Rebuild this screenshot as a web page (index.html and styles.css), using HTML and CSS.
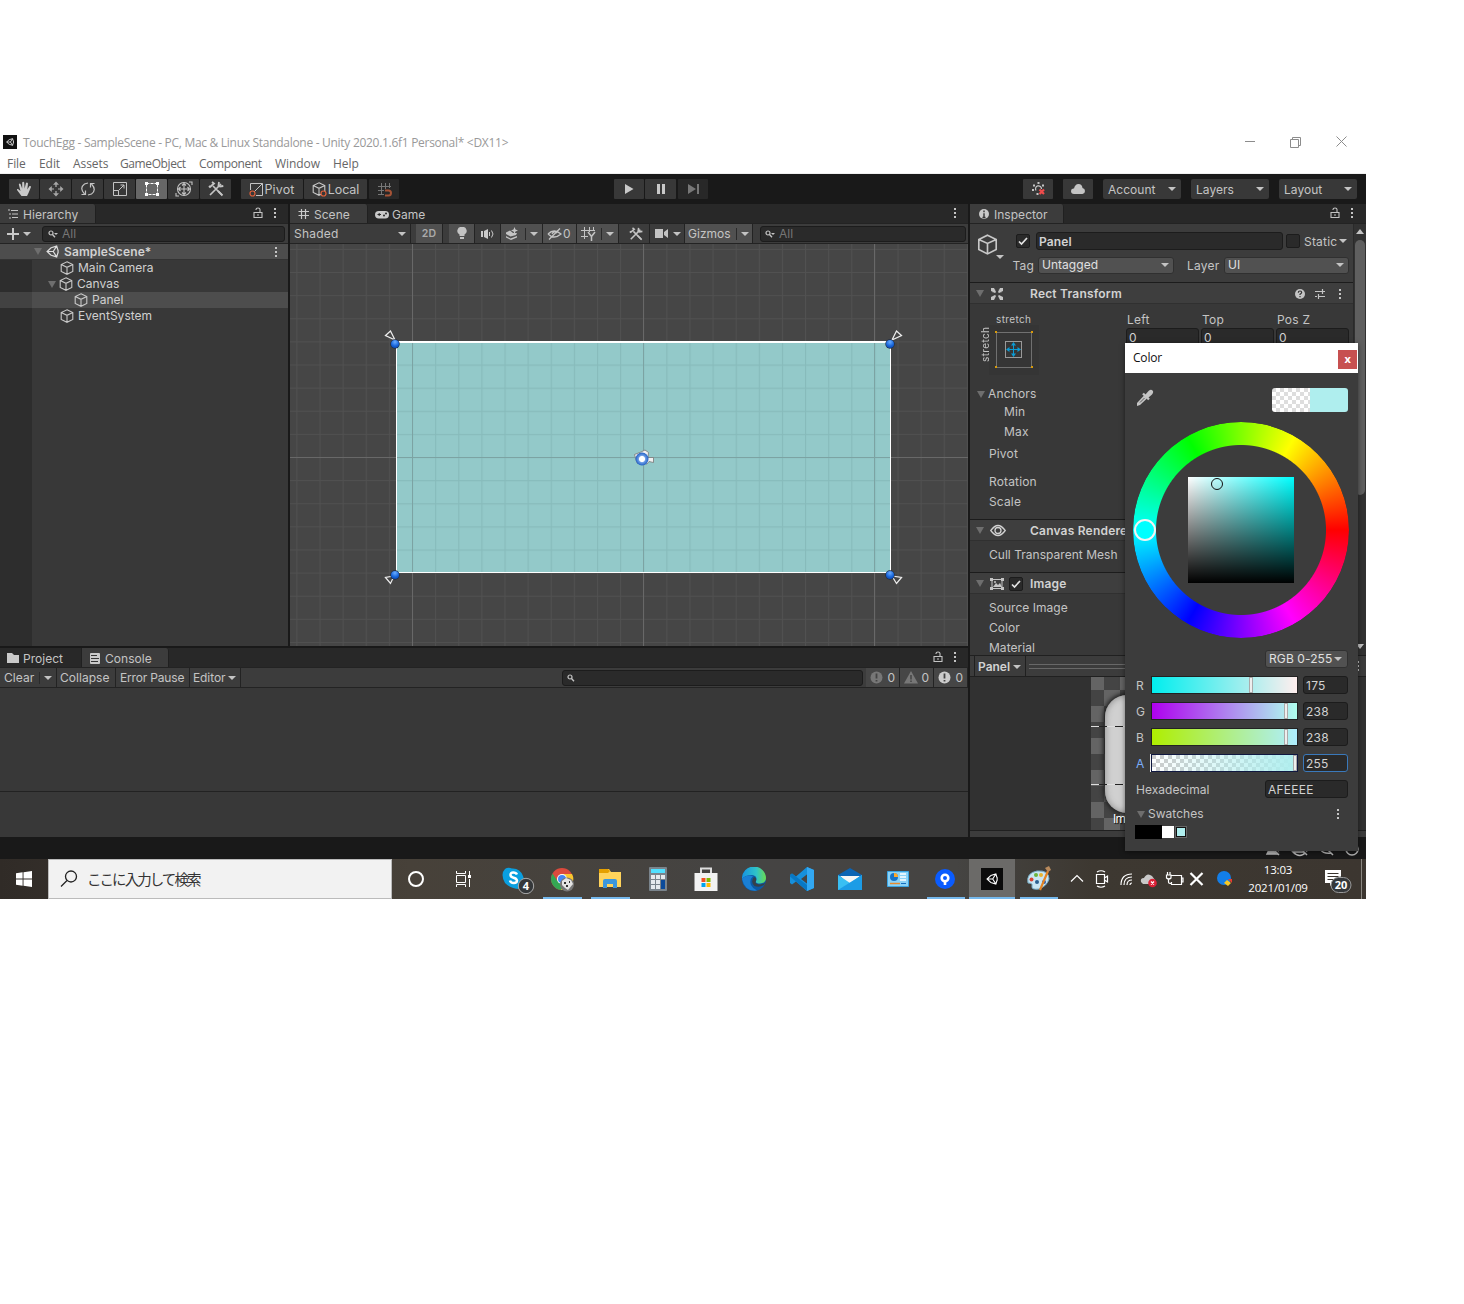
FILE: index.html
```html
<!DOCTYPE html>
<html lang="ja">
<head>
<meta charset="utf-8">
<title>TouchEgg - Unity</title>
<link rel="stylesheet" href="styles.css">
</head>
<body>
<svg class="defs" width="0" height="0">
  <defs>
    <symbol id="cube" viewBox="0 0 14 14"><path d="M7 .8 12.8 3.6V10.400L7 13.300 1.200 10.400V3.600ZM1.200 3.600 7 6.300 12.800 3.600M7 6.300V13.300" fill="none" stroke="#c8c8c8" stroke-width="1.100"/></symbol>
    <symbol id="lock" viewBox="0 0 10 12"><path d="M1 5.500H9V10.500H1ZM3 3V2.500Q3 1 5 1T7 2.500V5.500M4 8H6" fill="none" stroke="#c4c4c4" stroke-width="1.100"/></symbol>
    <symbol id="dots" viewBox="0 0 4 12"><path d="M1 1H3V3H1ZM1 5H3V7H1ZM1 9H3V11H1Z" fill="#c4c4c4"/></symbol>
    <symbol id="mag" viewBox="0 0 10 8"><circle cx="3" cy="3" r="2" fill="none" stroke="#c4c4c4" stroke-width="1.200"/><path d="M4.500 4.500 7 7.200" stroke="#c4c4c4" stroke-width="1.400"/></symbol>
    <symbol id="magd" viewBox="0 0 10 8"><circle cx="3" cy="3" r="2" fill="none" stroke="#c4c4c4" stroke-width="1.200"/><path d="M4.500 4.500 7 7.200" stroke="#c4c4c4" stroke-width="1.400"/><path d="M6 3H10L8 5Z" fill="#c4c4c4"/></symbol>
    <symbol id="check" viewBox="0 0 12 12"><path d="M2 6.500 4.500 9 10 3" fill="none" stroke="#e4e4e4" stroke-width="1.700"/></symbol>
    <symbol id="unity" viewBox="0 0 14 14"><path d="M5.500 3 1.200 7 5.500 11M5.500 3 11.500 1.200 13 6M5.500 11 11.500 12.800 13 8M1.200 7H7.800M7.800 7 11.500 1.200M7.800 7 11.500 12.800M13 5V9" fill="none" stroke="currentColor" stroke-width="1.300"/></symbol>
    <symbol id="tools" viewBox="0 0 16 16"><path d="M2 14 13 3M5 5 14 14" stroke="#c4c4c4" stroke-width="1.700"/><path d="M11 1 10.500 4.500 12 5.500 15.300 5M1 5 2 6 6 2.500 4 1M10 10 14.500 14.500" fill="none" stroke="#c4c4c4" stroke-width="1.800"/></symbol>
  </defs>
</svg>
<div class="screen">
  <header class="titlebar">
    <svg class="appicon" width="14" height="14"><rect width="14" height="14" fill="#111"/><g color="#fff" transform="translate(3 3)"><use href="#unity" width="8" height="8"/></g></svg>
    <span class="title">TouchEgg - SampleScene - PC, Mac &amp; Linux Standalone - Unity 2020.1.6f1 Personal* &lt;DX11&gt;</span>
    <svg class="winbtns" width="104" height="14" fill="none" stroke="#8c8c8c"><path d="M0 6.500H10M45.500 4.500H53.500V12.500H45.500ZM47.500 4.500V2.500H55.500V10.500H53.500M91.500 1.500 101.500 11.500M101.500 1.500 91.500 11.500"/></svg>
  </header>
  <nav class="menubar"><span class="m1">File</span><span class="m2">Edit</span><span class="m3">Assets</span><span class="m4">GameObject</span><span class="m5">Component</span><span class="m6">Window</span><span>Help</span></nav>
  <div class="toolbar">
    <div class="tools">
      <b class="tb w30"><svg width="16" height="16"><path d="M5.500 15 1 9Q.6 7.800 2 8L4.500 10 2.800 3.500Q3.500 2 4.500 3L6.200 7.500V1.500Q7.200.2 8.200 1.500L8.600 7.500 10 2Q11.200 1 12 2.500L11.300 8.500 13.500 5Q15 4.500 15 6L12.500 12 11 15Z" fill="#c9c9c9"/></svg></b>
      <b class="tb"><svg width="16" height="16"><path d="M8 2V6M8 10V14M2 8H6M10 8H14" stroke="#b4b4b4" stroke-width="1.200"/><path d="M5 3.800 8 .5 11 3.800ZM5 12.200 8 15.500 11 12.200ZM3.800 5 .5 8 3.800 11ZM12.200 5 15.500 8 12.200 11Z" fill="#a8a8a8"/></svg></b>
      <b class="tb"><svg width="16" height="16" fill="none" stroke="#c4c4c4" stroke-width="1.200"><path d="M4.500 13Q-1 7 4.500 3L8 2M11.500 3Q17 9 11.500 13L8 14M1.500 13.500H5.500V9.500M14.500 2.500H10.500V6.500"/></svg></b>
      <b class="tb"><svg width="16" height="16" fill="none" stroke="#c4c4c4"><path d="M1.500 1.500H14.500V14.500H1.500ZM1.500 9.500H6.500V14.500M6.500 9.500 12 4M8.500 4H12V7.500"/></svg></b>
      <b class="tb on"><svg width="16" height="16"><path d="M2.500 2.500H13.500V13.500H2.500Z" fill="none" stroke="#fff" stroke-dasharray="3 1"/><path d="M1 1H4V4H1ZM12 1H15V4H12ZM1 12H4V15H1ZM12 12H15V15H12Z" fill="#fff"/></svg></b>
      <b class="tb"><svg width="18" height="16" fill="none" stroke="#c4c4c4" stroke-width="1.100"><circle cx="9" cy="8" r="6.500"/><path d="M9 2.500V13.500M3.500 8H14.500M7 4.500 9 2.500 11 4.500M7 11.500 9 13.500 11 11.500M5.500 6 3.500 8 5.500 10M12.500 6 14.500 8 12.500 10M14 1H17V4M1 12V15H4"/></svg></b>
      <b class="tb"><svg width="16" height="16"><use href="#tools"/></svg></b>
    </div>
    <div class="pivots">
      <b class="tb w62"><svg width="15" height="15" fill="none"><path d="M1.500 8V1.500H13.500V13.500H7M5 10 13.500 1.500" stroke="#c4c4c4"/><circle cx="3.500" cy="11.500" r="2.500" stroke="#e0603a" stroke-width="1.200"/></svg><span>Pivot</span></b>
      <b class="tb w63"><svg width="16" height="15"><use href="#cube" width="14" height="14"/><circle cx="11.500" cy="11.500" r="2.500" fill="#383838" stroke="#e0603a" stroke-width="1.200"/></svg><span>Local</span></b>
      <b class="tb w30 dim"><svg width="15" height="15" fill="none"><path d="M4.500 1V13M8.500 1V7M12.500 1V6M1 4.500H14M1 8.500H7M1 12.500H7" stroke="#777"/><path d="M8 8.500H11.500Q14 8.500 14 11T11.500 13.500H8" stroke="#a65336" stroke-width="2"/></svg></b>
    </div>
    <div class="plays">
      <b class="tb w30"><svg width="10" height="10"><path d="M1 0 9.500 5 1 10Z" fill="#c9c9c9"/></svg></b>
      <b class="tb"><svg width="10" height="10"><path d="M1 0H4V10H1ZM6 0H9V10H6Z" fill="#c9c9c9"/></svg></b>
      <b class="tb w30 dim"><svg width="11" height="10"><path d="M0 0 8 5 0 10ZM9 0H11V10H9Z" fill="#777"/></svg></b>
    </div>
    <div class="account">
      <b class="tb w30"><svg width="15" height="14"><path d="M5 8.500A3 3 0 1 1 10.500 7" fill="none" stroke="#c4c4c4" stroke-width="1.200"/><path d="M6.500 0H8.500V2H6.500ZM2 2.500H4V4.500H2ZM11 2.500H13V4.500H11ZM1 7H3V9H1ZM5.500 11H7.500V13H5.500Z" fill="#c4c4c4"/><path d="M8.500 7.500 13 12M13 7.500 8.500 12" stroke="#f04c4c" stroke-width="2.200"/></svg></b>
      <b class="tb w30"><svg width="14" height="10"><path d="M3 10Q0 10 0 7T3 4.500Q4 0 7.500 0T11.500 4Q14 4.500 14 7T11.500 10Z" fill="#c4c4c4"/></svg></b>
      <b class="tb drop"><span>Account</span><i class="tri"></i></b><b class="tb drop"><span>Layers</span><i class="tri"></i></b><b class="tb drop"><span>Layout</span><i class="tri"></i></b>
    </div>
  </div>

  <main class="work">
    <div class="left">
      <div class="upper">
        <section class="pane hierarchy">
          <div class="tabs">
            <span class="tab th"><svg width="12" height="10"><path d="M1 1H3M2 5H4M2 9H4" stroke="#c4c4c4"/><path d="M4 1.500H11M5 5H11M5 8.500H11" stroke="#c4c4c4"/></svg>Hierarchy</span>
            <svg class="lk" width="10" height="12"><use href="#lock"/></svg><svg width="4" height="12"><use href="#dots"/></svg>
          </div>
          <div class="bar">
            <svg class="plus" width="12" height="12"><path d="M6 0V12M0 6H12" stroke="#c9c9c9" stroke-width="2"/></svg><i class="tri"></i>
            <span class="search s1"><svg width="10" height="8"><use href="#magd"/></svg>All</span>
          </div>
          <div class="tree">
            <div class="node scene-node"><i class="fold"></i><svg width="14" height="14" color="#ddd"><use href="#unity" width="13" height="13"/></svg><strong>SampleScene*</strong><svg class="nd" width="4" height="12"><use href="#dots"/></svg></div>
            <div class="node l1"><svg width="14" height="14"><use href="#cube"/></svg>Main Camera</div>
            <div class="node l1c"><i class="fold"></i><svg width="14" height="14"><use href="#cube"/></svg>Canvas</div>
            <div class="node l2 sel"><svg width="14" height="14"><use href="#cube"/></svg>Panel</div>
            <div class="node l1"><svg width="14" height="14"><use href="#cube"/></svg>EventSystem</div>
          </div>
        </section>
        <section class="pane sceneview">
          <div class="tabs">
            <span class="tab ts"><svg width="12" height="12"><path d="M3.500 1V11M7.500 1V11M.5 3.500H11M.5 7.500H11" stroke="#c9c9c9" stroke-width="1.200"/></svg>Scene</span>
            <span class="tab-off"><svg width="14" height="9"><rect y="1" width="14" height="7.500" rx="3.700" fill="#c9c9c9"/><path d="M2.500 4.500H6M4.200 3V6" stroke="#282828"/><circle cx="9" cy="5.500" r="1" fill="#282828"/><circle cx="11" cy="3.500" r="1" fill="#282828"/></svg>Game</span>
            <svg class="push" width="4" height="12"><use href="#dots"/></svg>
          </div>
          <div class="bar sbar">
            <span class="c shade">Shaded<i class="tri"></i></span>
            <span class="c lit w2d"><strong>2D</strong></span>
            <span class="c lit wb"><svg width="10" height="13"><path d="M5 0A4 4 0 0 1 7.500 7.500V9H2.500V7.500A4 4 0 0 1 5 0ZM3 10H7V12H3Z" fill="#c4c4c4"/></svg></span>
            <span class="c wb"><svg width="13" height="12"><path d="M0 3H2V9H0ZM3 3 7 1V11L3 9Z" fill="#c9c9c9"/><path d="M8.500 4V8M10.500 2.500Q13.500 6 10.500 9.500" fill="none" stroke="#c9c9c9"/></svg></span>
            <span class="c lit wfx"><svg width="14" height="13"><path d="M1 5.500 5 3.500 8 6 12 6 11 8 5.500 9.500 1 7ZM1 9 5.500 11.500 12 9V10.500L6 13 1 10.500ZM9.500 0 10.500 2.500 13 3.500 10.500 4.500 9.500 7 8.500 4.500 6 3.500 8.500 2.500Z" fill="#c4c4c4"/></svg><i class="sep"></i><i class="tri"></i></span>
            <span class="c lit weye"><svg width="15" height="12" fill="none" stroke="#c4c4c4" stroke-width="1.300"><path d="M1 6Q7 0 14 6Q7 12 1 6M2 11.500 13 .5M5 6Q7.500 2 10 5"/></svg>0</span>
            <span class="c lit wgrid"><svg width="15" height="14" fill="none" stroke="#c4c4c4"><path d="M3.500 0V12M8.500 0V5M12.500 0V4M0 3.500H14M0 9.500H7"/><path d="M7 5 10.500 9.500 14 5M10.500 9V14" stroke-width="1.500"/></svg><i class="sep"></i><i class="tri"></i></span>
            <span class="c wt"><svg width="14" height="14"><use href="#tools"/></svg></span>
            <span class="c wcam"><svg width="13" height="9"><path d="M0 0H8V9H0ZM9 3 13 0V9L9 6Z" fill="#c4c4c4"/></svg><i class="tri"></i></span>
            <span class="c lit wgiz">Gizmos<i class="sep"></i><i class="tri"></i></span>
            <span class="search s2"><svg width="10" height="8"><use href="#magd"/></svg>All</span>
          </div>
          <svg class="canvas" width="678" height="402" viewBox="290 244 678 402">
            <defs>
              <pattern id="minor" x="412" y="457" width="23.120" height="23.120" patternUnits="userSpaceOnUse"><path d="M.5 0V23.120M0 .5H23.120" stroke="#fff" stroke-opacity=".06" stroke-width="1" fill="none"/></pattern>
              <pattern id="minord" x="412" y="457" width="23.120" height="23.120" patternUnits="userSpaceOnUse"><path d="M.5 0V23.120M0 .5H23.120" stroke="#4a7878" stroke-opacity=".17" stroke-width="1.200" fill="none"/></pattern>
              <radialGradient id="knob" cx=".5" cy=".25" r=".8"><stop offset="0" stop-color="#6aadff"/><stop offset=".6" stop-color="#1967dc"/><stop offset="1" stop-color="#0b45a8"/></radialGradient>
              <radialGradient id="lens" cx=".5" cy=".5" r=".5"><stop offset=".4" stop-color="#fff"/><stop offset=".55" stop-color="#6c9de6"/><stop offset="1" stop-color="#1f5fc4"/></radialGradient>
              <g id="handle"><circle r="4.700" fill="#1d2b45"/><circle r="4" fill="url(#knob)"/></g>
            </defs>
            <rect x="290" y="244" width="678" height="402" fill="#464646"/>
            <rect x="290" y="244" width="678" height="402" fill="url(#minor)"/>
            <path d="M412.500 244V646M643.500 244V646M874.500 244V646M290 457.500H968" stroke="#686868"/>
            <rect x="396" y="342" width="495" height="231" fill="#93c9c9"/>
            <rect x="396" y="342" width="495" height="231" fill="url(#minord)"/>
            <path d="M412.500 342V573M643.500 342V573M874.500 342V573M396 457.500H891" stroke="#7ca3a3"/>
            <path d="M396.500 342V572.500H890.500V342" fill="none" stroke="#fff"/><path d="M396 342H891" stroke="#fff" stroke-width="2"/>
            <g fill="#464646" stroke="#eee" stroke-width="1.200"><path d="M385.500 335.500 390.500 331 395 340Z"/><path d="M901.500 335.500 896.500 331 892 340Z"/><path d="M385.500 577.500 390.500 583.500 394 576Z"/><path d="M901.500 577.500 896.500 583.500 892 576Z"/></g>
            <use href="#handle" x="395" y="344"/><use href="#handle" x="890" y="344"/><use href="#handle" x="395" y="575"/><use href="#handle" x="890" y="575"/>
            <path d="M634.500 454.500 641 452 645 450 648.500 452.500 648 457.500 653.500 457.500V462.500L649 461.500 647 464 637 463Z" fill="#f0f0f0" stroke="#777" stroke-width=".8"/>
            <circle cx="642" cy="459" r="6.500" fill="url(#lens)"/>
          </svg>
        </section>
      </div>
      <section class="pane console">
        <div class="tabs">
          <span class="tab-off tp"><svg width="12" height="10"><path d="M0 0H5L7 2H12V10H0Z" fill="#c9c9c9"/></svg>Project</span>
          <span class="tab tc"><svg width="10" height="11"><rect width="10" height="11" rx="1" fill="#c9c9c9"/><path d="M1 2.500H7M1 5.500H9M1 8.500H8" stroke="#333"/></svg>Console</span>
          <svg class="lk" width="10" height="12"><use href="#lock"/></svg><svg width="4" height="12"><use href="#dots"/></svg>
        </div>
        <div class="bar cbar">
          <span class="c k1">Clear<i class="sep"></i><i class="tri"></i></span><span class="c k2">Collapse</span><span class="c k3">Error Pause</span><span class="c k4">Editor<i class="tri"></i></span>
          <span class="search s3"><svg width="10" height="8"><use href="#mag"/></svg></span>
          <span class="c k5 lit2"><svg width="13" height="13"><circle cx="6.500" cy="6.500" r="6" fill="#777"/><path d="M6.500 2.500V7.500M6.500 9V10.500" stroke="#444" stroke-width="1.800"/></svg>0</span>
          <span class="c k6 lit2"><svg width="14" height="13"><path d="M7 0 14 12.500H0Z" fill="#777"/><path d="M7 4V8.500M7 9.500V11" stroke="#444" stroke-width="1.500"/></svg>0</span>
          <span class="c k7 lit2"><svg width="14" height="13"><circle cx="6.500" cy="6.500" r="6" fill="#ccc"/><path d="M6.500 2.500V7.500M6.500 9V10.500" stroke="#444" stroke-width="1.800"/></svg>0</span>
        </div>
        <div class="log"></div><div class="detail"></div>
      </section>
    </div>

    <section class="pane inspector">
      <div class="tabs">
        <span class="tab ti"><svg width="10" height="10"><circle cx="5" cy="5" r="5" fill="#c9c9c9"/><path d="M5 1.500V3.200M5 4.200V8.500M3.500 8.500H6.500" stroke="#333" stroke-width="1.400"/></svg>Inspector</span>
        <svg class="lk" width="10" height="12"><use href="#lock"/></svg><svg width="4" height="12"><use href="#dots"/></svg>
      </div>
      <div class="insp-body">
        <div class="props">
          <div class="objhead">
            <svg width="28" height="30"><use href="#cube" x="0" y="1" width="21" height="23"/><path d="M19 23H27L23 27Z" fill="#c4c4c4"/></svg>
            <div class="objrows">
              <div class="orow"><span class="chk"><svg width="12" height="12"><use href="#check"/></svg></span><span class="field fname"><strong>Panel</strong></span><span class="chk"></span><span class="static">Static</span><i class="tri"></i></div>
              <div class="orow2"><span class="lab tag">Tag</span><span class="dd d1">Untagged<i class="tri"></i></span><span class="lab layer">Layer</span><span class="dd d2">UI<i class="tri"></i></span></div>
            </div>
          </div>
          <div class="comp"><i class="fold"></i><svg class="ci" width="14" height="12"><path d="M1.500 1 5 4.500M2 4.500H5V1M12.500 1 9 4.500M9 1V4.500H12M1.500 11 5 7.500M12.500 11 9 7.500" fill="none" stroke="#555"/><path d="M1 0H4L6 4 5 5 1 3ZM13 0H10L8 4 9 5 13 3ZM1 12H4L6 8 5 7 1 9ZM13 12H10L8 8 9 7 13 9Z" fill="#c4c4c4"/></svg><strong>Rect Transform</strong>
            <svg class="help" width="52" height="12"><circle cx="6" cy="6" r="5" fill="#c4c4c4"/><path d="M4.300 4.800Q4.300 3 6 3T7.700 4.700Q7.500 5.500 6 6.200V7M6 8V9.200" fill="none" stroke="#333" stroke-width="1.200"/><path d="M21 3.500H28M29 3.500H31M21 8.500H23M25 8.500H31M28.500 1V6M24.500 6V11" stroke="#c4c4c4" stroke-width="1.200"/><use href="#dots" x="44" width="4" height="12"/></svg>
          </div>
          <div class="rect">
            <div class="anchorbox"><small>stretch</small><div class="arow"><small class="vert">stretch</small>
              <svg width="50" height="50"><rect width="50" height="50" fill="#353535"/><rect x="7.500" y="7.500" width="35" height="35" fill="none" stroke="#707070"/><rect x="16.500" y="16.500" width="16" height="16" fill="none" stroke="#999"/><path d="M24.500 18V31M18 24.500H31" stroke="#0a9bd4"/><path d="M22 20.500 24.500 17 27 20.500ZM22 28.500 24.500 32 27 28.500ZM20.500 22 17 24.500 20.500 27ZM28.500 22 32 24.500 28.500 27Z" fill="#0a9bd4"/><path d="M6 6H8V8H6ZM42 6H44V8H42ZM6 41H8V43H6ZM42 41H44V43H42Z" fill="#d79a0a"/></svg></div></div>
            <div class="ltz"><div><span>Left</span><span class="field">0</span></div><div><span>Top</span><span class="field">0</span></div><div><span>Pos Z</span><span class="field">0</span></div></div>
            <div class="plist"><p class="anch"><i class="fold"></i>Anchors</p><p class="in">Min</p><p class="in">Max</p><p class="pv">Pivot</p><p class="ro">Rotation</p><p>Scale</p></div>
          </div>
          <div class="comp"><i class="fold"></i><svg class="ci" width="17" height="13" fill="none" stroke="#d2d2d2" stroke-width="1.300"><path d="M.8 6.500Q8 -3.500 15.200 6.500Q8 16.500 .8 6.500Z"/><circle cx="8" cy="6.500" r="3"/></svg><strong>Canvas Renderer</strong></div>
          <div class="cull">Cull Transparent Mesh</div>
          <div class="comp"><i class="fold"></i><svg class="ci" width="14" height="12"><path d="M2 1.500H12V10.500H2Z" fill="none" stroke="#c4c4c4"/><path d="M0 0H3V3H0ZM11 0H14V3H11ZM0 9H3V12H0ZM11 9H14V12H11ZM3 9 6 5 8 7 10 5 12 9Z" fill="#c4c4c4"/><circle cx="5" cy="4" r="1" fill="#c4c4c4"/></svg><span class="chk ck2"><svg width="12" height="12"><use href="#check"/></svg></span><strong>Image</strong></div>
          <div class="imgp"><p>Source Image</p><p>Color</p><p>Material</p></div>
        </div>
        <div class="scroll"><i class="up"></i><i class="thumb"></i><i class="down"></i></div>
      </div>
      <div class="prevhead"><span><strong>Panel</strong><i class="tri"></i></span><i class="grip"></i><svg width="4" height="12"><use href="#dots"/></svg></div>
      <div class="preview"><div class="checker"><div class="sprite"></div><i class="dash da"></i><i class="dash db"></i><span>Im</span></div></div>
      <div class="prevfoot"></div>
    </section>
  </main>
  <div class="status"><svg width="96" height="16" fill="none" stroke="#b8b8b8" stroke-width="1.500"><path d="M3 13Q9 -1 15 13Z" fill="#b8b8b8"/><path d="M29 11Q36 18 42 11ZM57 9Q59 13 68 12"/><path d="M4 2 16 14M32 2 44 14M58 2 70 14" stroke="#191919" stroke-width="2"/><path d="M3 2 15 14M31 2 43 14M57 2 69 14"/><circle cx="88" cy="8" r="6"/></svg></div>

  <footer class="taskbar">
    <span class="start"><svg width="16" height="16" fill="#fff"><path d="M0 2.200 6.600 1.300V7.500H0ZM7.500 1.200 16 0V7.500H7.500ZM0 8.500H6.600V14.700L0 13.800ZM7.500 8.500H16V16L7.500 14.800Z"/></svg></span>
    <span class="find"><svg width="18" height="18" fill="none" stroke="#222" stroke-width="1.300"><circle cx="11" cy="6.500" r="5.500"/><path d="M7 10.500 1 16.500"/></svg>ここに入力して検索</span>
    <span class="app"><svg width="18" height="18"><circle cx="9" cy="9" r="7" fill="none" stroke="#fff" stroke-width="2"/></svg></span>
    <span class="app tv"><svg width="17" height="16" fill="none" stroke="#fff"><path d="M1.500 4.500H10.500V11.500H1.500ZM1.500 0V2.500H10.500V0M1.500 16V13.500H10.500V16M14.500 0V4M14.500 8V16"/><path d="M13 4H16V7H13Z" fill="#fff" stroke="none"/></svg></span>
    <span class="app"><svg width="34" height="30"><path d="M11 4.500Q19 4 22 12Q26 22 18 25Q10 25 4 19Q-1 10 4 5Q7 3 11 4.500Z" fill="#0a9fe0"/><path d="M16 10.500Q15 8.500 12.200 8.500T9.500 11Q9.500 13 12.500 13.700T16 16.500Q16 19 12.800 19T9 16.500" fill="none" stroke="#fff" stroke-width="2.500"/><circle cx="25" cy="22" r="7.700" fill="#343739" stroke="#aaa"/><text x="25" y="26" text-anchor="middle" class="badge">4</text></svg></span>
    <span class="app run"><svg width="24" height="26"><circle cx="12" cy="13" r="11" fill="#dc4a3d"/><path d="M2.500 7.500A11 11 0 0 0 11 24L16.500 15 7.500 15Z" fill="#34a653"/><path d="M12 8H22A11 11 0 0 1 11 24L16.500 15.500Z" fill="#f9c62f"/><circle cx="12" cy="13" r="5" fill="#fff"/><circle cx="12" cy="13" r="4" fill="#4487f4"/><circle cx="17" cy="18.500" r="7" fill="#777"/><path d="M12 15 16 12 21 14 23 18 18 24 15 22 12 19Z" fill="#e4e4e4"/><path d="M14 16H16V18H14ZM19 15H20V17H19ZM16 19H18V21H16Z" fill="#333"/></svg></span>
    <span class="app run"><svg width="24" height="22"><path d="M1 1H11L13 4H23V19H1Z" fill="#ffd35b"/><path d="M1 1H10L12 3 10 5H1Z" fill="#e5a000"/><path d="M5 20V13Q5 11 7 11H17Q19 11 19 13V20H15V16H9V20Z" fill="#3a96dd"/></svg></span>
    <span class="app"><svg width="18" height="24"><rect width="18" height="24" rx="1" fill="#7a848c"/><path d="M2 2H16V6H2Z" fill="#50e0ff"/><path d="M2 8H6V12H2ZM7 8H11V12H7ZM12 8H16V12H12ZM2 13H6V17H2ZM7 13H11V17H7ZM2 18H6V22H2ZM7 18H11V22H7Z" fill="#e6eaed"/><path d="M12 13H16V22H12Z" fill="#0a4a9a"/></svg></span>
    <span class="app"><svg width="24" height="24"><path d="M7 6V1.500H17V6" fill="none" stroke="#ddd" stroke-width="2"/><path d="M.5 6H23.500V24H.5Z" fill="#f2f2f2"/><path d="M7.500 11H11.500V15H7.500Z" fill="#f25022"/><path d="M12.500 11H16.500V15H12.500Z" fill="#7fba00"/><path d="M7.500 16H11.500V20H7.500Z" fill="#00a4ef"/><path d="M12.500 16H16.500V20H12.500Z" fill="#ffb900"/></svg></span>
    <span class="app"><svg width="24" height="24"><defs><linearGradient id="eg"><stop stop-color="#1693e0"/><stop offset=".6" stop-color="#2fc3c8"/><stop offset="1" stop-color="#6bdc50"/></linearGradient></defs><circle cx="12" cy="12" r="12" fill="#0c59a4"/><path d="M0 12A12 12 0 0 1 24 11Q24 16 18 16.500Q13 16.500 14 14Q16 9 10 8Q3 8 0 12Z" fill="url(#eg)"/><path d="M0 12Q4 7 11 9Q7 13 9 18Q11 22 15 23.600Q3 25 0 12Z" fill="#1a7fd4"/><path d="M14 14Q12 17 18 17.500 21 17 23 16L22 18Q17 21 12.500 19 8 15 12 10 15 11 14 14Z" fill="#35404a"/></svg></span>
    <span class="app"><svg width="24" height="24"><path d="M17 0 24 3V21L17 24 6 14.500 2 17.500 0 16V8L2 6.500 6 9.500ZM17.500 7 11 12 17.500 17Z" fill="#1690dc" fill-rule="evenodd"/><path d="M17 0 24 3V21L17 24Z" fill="#32a8f2"/><path d="M0 8 2 6.500 17 18V24L0 9.500Z" fill="#0878c4"/></svg></span>
    <span class="app"><svg width="24" height="24"><path d="M0 8 12 1 24 8V14H0Z" fill="#0b64b4"/><path d="M2 9H22L12 18Z" fill="#f5f5f5"/><path d="M0 8 12 16 24 8V23H0Z" fill="#39bff3"/><path d="M0 23 24 8V23Z" fill="#1c9ce6"/></svg></span>
    <span class="app"><svg width="22" height="17"><path d="M.5.5H21.500V15.500H.5Z" fill="#8bd3f8" stroke="#3ba5e4"/><circle cx="7" cy="6" r="4" fill="#1673c8"/><path d="M7 6V2A4 4 0 0 1 11 6Z" fill="#ffa929"/><path d="M13 3H19M13 6H19M13 9H19" stroke="#fff" stroke-width="1.500"/><path d="M3 12.500H13" stroke="#e78a2c" stroke-width="1.500"/><path d="M14 12.500H19" stroke="#176fc0"/></svg></span>
    <span class="app n47 run sta"><svg width="20" height="20"><circle cx="10" cy="10" r="10" fill="#0a5cff"/><circle cx="10" cy="9" r="3.300" fill="none" stroke="#fff" stroke-width="2.600"/><path d="M8.700 12H11.300V16H8.700Z" fill="#fff"/></svg></span>
    <span class="app n46 act"><svg width="22" height="22"><rect width="22" height="22" fill="#0b0b0b"/><g color="#fff" transform="translate(5 5)"><use href="#unity" width="12" height="12"/></g></svg></span>
    <span class="app n47 run"><svg width="26" height="26"><path d="M2 17Q0 7 11 5Q23 4 23 13Q21 20 13 23Q5 24 6 20Q7 17 2 17Z" fill="#c9e6f3" stroke="#77aec9"/><circle cx="5.500" cy="13.500" r="2" fill="#d84433"/><circle cx="10" cy="9" r="2" fill="#6bb53b"/><circle cx="15" cy="9" r="2" fill="#e8b430"/><circle cx="11" cy="16" r="2" fill="#2c6191"/><circle cx="18" cy="16" r="2" fill="#315aa6"/><path d="M14 24 22 5" stroke="#e28425" stroke-width="2.200"/><path d="M19 2 23 0 25 4 22 6Z" fill="#b98a5c"/></svg></span>
    <svg class="tray" width="170" height="22" fill="none" stroke="#fff" stroke-width="1.200"><path d="M2 13.500 8 7.500 14 13.500"/><path d="M27.500 6.500H35.500V15.500H27.500ZM35.500 10 38.500 8V14L35.500 12M28 4Q32 1.500 36 4M28 18Q32 20.500 36 18"/><path d="M52 17Q52 6 63 6M55 17Q55 9 63 9M58 17Q58 12 63 12M61 17Q61 15 63 15"/><path d="M72 14Q71 10 75 10Q78 4 83 8L86 12 84 16H74Z" fill="#c8c8c8" stroke="none"/><circle cx="83.500" cy="15" r="4.300" fill="#db2036" stroke="none"/><path d="M82 13.500 85 16.500M85 13.500 82 16.500"/><path d="M102 7.500H112.500V16.500H102.500V14M112.500 10H114V14H112.500M99.500 11V14Q99.500 16 103 15M97.500 7H102V10Q99.800 12 97.500 10ZM98.500 4V7M101 4V7"/><path d="M121.500 5 133.500 17M133.500 5 121.500 17" stroke-width="2.200"/><circle cx="155" cy="10" r="7" fill="#137ee8" stroke="none"/><path d="M155 15 158 12 162 15 159 18Z" fill="#f8c825" stroke="none"/><path d="M159 11H163V15Z" fill="#e63d2e" stroke="none"/></svg>
    <span class="clock"><time>13:03</time><time>2021/01/09</time></span>
    <svg class="note" width="30" height="28"><path d="M1 5H17V18H9L6 21V18H1Z" fill="#fff"/><path d="M3.500 8.500H14.500M3.500 11.500H14.500M3.500 14.500H11" stroke="#3a342e"/><circle cx="17" cy="20" r="8.500" fill="#34373a"/><rect x="7" y="12.500" width="20" height="15" rx="7.500" fill="#34373a" stroke="#999"/><text x="17" y="24" text-anchor="middle" class="badge">20</text></svg>
    <i class="edge"></i>
  </footer>

  <aside class="picker">
    <div class="ptitle">Color<b>x</b></div>
    <div class="pick-top"><svg width="18" height="18"><path d="M1 18V15L8 7.500 11 10.500 4 17Z" fill="#c4c4c4"/><path d="M4 14.500 8.500 10" stroke="#555"/><path d="M7 5.500 13 11.500" stroke="#c4c4c4" stroke-width="2.300"/><path d="M9 7 12.500 3Q15 1 16.500 2.500T16 6.500L12 10Z" fill="#c4c4c4"/></svg><span class="cmp"><i></i><b></b></span></div>
    <div class="wheel"><div class="ring"></div><div class="sv"></div><i class="h-hue"></i><i class="h-sv"></i></div>
    <div class="mode"><span class="dd">RGB 0-255<i class="tri"></i></span></div>
    <div class="ch"><label>R</label><span class="sl r"><i style="left:67%"></i></span><span class="field">175</span></div>
    <div class="ch"><label>G</label><span class="sl g"><i style="left:91%"></i></span><span class="field">238</span></div>
    <div class="ch"><label>B</label><span class="sl b"><i style="left:91%"></i></span><span class="field">238</span></div>
    <div class="ch foc"><label>A</label><span class="sl a"><i style="left:97.500%"></i></span><span class="field">255</span></div>
    <div class="hex"><span>Hexadecimal</span><span class="field">AFEEEE</span></div>
    <div class="swh"><i class="fold"></i>Swatches<svg width="4" height="12"><use href="#dots"/></svg></div>
    <div class="sws"><i class="k"></i><i class="w"></i><i class="t"></i></div>
  </aside>
</div>
</body>
</html>
```
FILE: styles.css
```css
* { box-sizing: border-box; }
body { margin: 0; background: #fff; font: 12px/16px Inter, "Liberation Sans", sans-serif; letter-spacing: .03px; color: #c4c4c4; }
.defs { position: absolute; }
svg { flex: none; display: block; }
i, b { font-style: normal; font-weight: 400; }
p { margin: 0; }
strong { font-weight: 600; color: #d2d2d2; letter-spacing: .15px; }
.screen { position: relative; width: 1366px; margin-top: 131px; }

.titlebar { display: flex; align-items: center; height: 22px; color: #999; font: 12px/16px "Open Sans", "Noto Sans", sans-serif; letter-spacing: -.29px; background: #fff; }
.appicon { margin: 0 6px 0 3px; }
.title { white-space: nowrap; padding-top: 2px; }
.winbtns { margin: 0 17px 0 auto; }
.menubar { display: flex; height: 21px; padding: 1px 0 0 7px; color: #666; font: 12px/20px "Open Sans", "Noto Sans", sans-serif; letter-spacing: -.06px; border-bottom: 1px solid #f0f0f0; }
.m1 { width: 32px; } .m2 { width: 34px; } .m3 { width: 47px; } .m4 { width: 79px; } .m5 { width: 76px; } .m6 { width: 58px; }
.m4 { letter-spacing: -.5px; } .m4, .m5 { letter-spacing: -.38px; } .m5 { letter-spacing: -.4px; }
.menubar .m4, .menubar .m5 { letter-spacing: -.4px; }

.toolbar { display: flex; height: 30px; padding: 5px 9px 5px; background: #191919; }
.toolbar > div { display: flex; gap: 1px; }
.tb { display: flex; align-items: center; justify-content: center; width: 31px; height: 20px; background: #383838; font-size: 12.500px; border-radius: 1px; }
.tb span { padding-top: 1px; }
.tb.on { background: #676767; }
.tb.dim { background: #282828; margin-left: 1px; }
.tb.w30 { width: 30px; } .tb.w62 { width: 62px; letter-spacing: .15px; } .tb.w63 { width: 63px; letter-spacing: -.1px; }
.pivots { margin-left: 10px; }
.plays { margin-left: 215px; }
.toolbar .account { margin-left: auto; gap: 10px; }
.tb.drop { width: 78px; justify-content: space-between; padding: 0 5px; border-radius: 2px; font-size: 12px; }
.tri { flex: none; width: 0; height: 0; border: 4px solid transparent; border-top: 4.500px solid #c4c4c4; border-bottom: 0; }
.fold { flex: none; width: 0; height: 0; border: 4.500px solid transparent; border-top: 7px solid #6e6e6e; border-bottom: 0; }

.work { display: grid; grid-template-columns: 968px 396px; gap: 2px; height: 633px; background: #191919; }
.left { display: grid; grid-template-rows: 442px 189px; gap: 2px; }
.upper { display: grid; grid-template-columns: 288px 678px; gap: 2px; }
.pane { min-width: 0; overflow: hidden; background: #383838; display: flex; flex-direction: column; }
.tabs { display: flex; align-items: center; height: 19px; flex: none; background: #282828; padding-right: 11px; gap: 10px; }
.tabs > svg { margin-bottom: 1px; }
.tab { display: flex; align-items: center; height: 19px; background: #3c3c3c; padding-top: 2px; border-radius: 0 3px 0 0; border-right: 1px solid #202020; }
.tab-off { display: flex; align-items: center; padding-top: 2px; }
.tab svg, .tab-off svg { margin-right: 4px; margin-bottom: 1px; }
.th { width: 96px; padding-left: 7px; } .ts { width: 78px; padding-left: 8px; } .ti { width: 94px; padding-left: 9px; }
.ts svg { margin-right: 4px; } .ti svg { margin-right: 5px; }
.sceneview .tabs { gap: 7px; } .tab-off svg { margin-right: 3px; }
.inspector .tabs { padding-right: 12px; }
.tp { width: 82px; padding-left: 7px; border-right: 1px solid #202020; height: 19px; } .tp svg { margin-right: 4px; }
.tc { width: 87px; padding-left: 8px; margin-left: -10px; }
.tc svg { margin-right: 5px; }
.lk, .push { margin-left: auto; }
.bar { display: flex; align-items: center; height: 21px; flex: none; background: #3c3c3c; border-top: 1px solid #232323; border-bottom: 1px solid #232323; }
.plus { margin: 0 4px 0 7px; }
.search { display: flex; align-items: center; height: 16px; background: #2a2a2a; border: 1px solid #1c1c1c; border-radius: 3px; color: #767676; padding-left: 4px; }
.search svg { margin-right: 4px; }
.s1 { width: 243px; margin-left: 11px; padding-left: 5px; } .s2 { width: 206px; margin-left: auto; margin-right: 2px; } .s3 { width: 301px; margin-left: auto; margin-right: 3px; }
.tree { flex: 1; background: linear-gradient(90deg, #2d2d2d 32px, #383838 32px); }
.node { display: flex; align-items: center; height: 16px; color: #d0d0d0; }
.node svg { margin-right: 4px; }
.scene-node { background: #4d4d4d; padding-left: 34px; border-bottom: 1px solid #333; }
.node .fold + svg { margin-left: 4px; }
.node.scene-node .fold + svg { margin: 0 4px 0 4px; }
.node .nd { margin: 0 10px 0 auto; }
.node strong { letter-spacing: .12px; }
.l1 { padding-left: 60px; } .l1c { padding-left: 48px; } .node.l1c .fold + svg { margin-left: 3px; } .l2 { padding-left: 74px; }
.sel { background: linear-gradient(90deg, #424242 32px, #4d4d4d 32px); }

.c { display: flex; align-items: center; height: 19px; border-right: 1px solid #232323; flex: none; }
.c.lit { background: #505050; } .c.lit2 { background: #464646; justify-content: space-between; padding: 0 4px; }
.sep { width: 1px; height: 12px; background: #2a2a2a; }
.shade { width: 121px; padding: 0 4px; justify-content: space-between; margin-right: 5px; letter-spacing: .2px; }
.w2d { width: 27px; justify-content: center; font-size: 10.500px; margin-right: 6px; } .w2d strong { color: #aaa; }
.wb { width: 26px; justify-content: center; }
.wfx { width: 42px; padding-left: 4px; } .wfx .sep { margin: 0 4px 0 6px; }
.weye { width: 34px; padding-left: 4px; gap: 1px; }
.wgrid { width: 42px; padding-left: 4px; margin-right: 4px; } .wgrid .sep { margin: 0 4px 0 5px; }
.wt { width: 27px; padding-left: 6px; } .wcam { width: 35px; padding-left: 5px; gap: 5px; }
.wgiz { width: 68px; padding-left: 3px; } .wgiz .sep { margin: 0 4px 0 5px; }
.canvas { flex: none; }
.k1 { width: 57px; padding-left: 4px; } .k1 .sep { margin: 0 4px 0 5px; }
.k2 { width: 59px; padding-left: 3px; } .k3 { width: 74px; padding-left: 4px; letter-spacing: -.17px; } .k4 { width: 51px; padding-left: 3px; gap: 3px; letter-spacing: -.1px; }
.k5, .k6 { width: 34px; } .k7 { width: 34px; }
.log { height: 104px; border-bottom: 1px solid #222; }

.insp-body { display: flex; height: 432px; overflow: hidden; border-top: 1px solid #232323; }
.props { width: 383px; flex: none; }
.objhead { height: 58px; display: flex; padding: 8px 0 0 7px; background: #3c3c3c; }
.objrows { flex: 1; margin-left: 6px; }
.orow { display: flex; align-items: center; height: 18px; margin-left: 5px; }
.chk { display: flex; align-items: center; justify-content: center; width: 14px; height: 14px; background: #2a2a2a; border: 1px solid #1c1c1c; border-radius: 2px; }
.field { display: flex; align-items: center; background: #2a2a2a; border: 1px solid #1c1c1c; border-radius: 3px; padding: 1px 0 0 2px; height: 18px; color: #d2d2d2; letter-spacing: .25px; }
.fname { width: 247px; margin: 0 3px 0 6px; }
.static { margin: 0 2px 0 4px; padding-top: 1px; letter-spacing: .2px; }
.orow2 { display: flex; align-items: center; margin-top: 6px; height: 18px; }
.dd { display: flex; align-items: center; justify-content: space-between; height: 17px; background: #515151; border: 1px solid #303030; border-radius: 3px; padding: 0 4px 0 3px; color: #e0e0e0; }
.d1 { width: 136px; margin-left: 4px; } .d2 { width: 125px; } .lab { padding-top: 1px; letter-spacing: .2px; } .tag { width: 24px; text-align: right; margin-left: -1px; } .layer { width: 37px; margin-left: 13px; }
.comp { display: flex; align-items: center; height: 22px; background: #3e3e3e; border-top: 1px solid #1c1c1c; border-bottom: 1px solid #303030; padding: 1px 0 0 6px; }
.comp .ci { margin-left: 6px; width: 17px; } .comp .ci[width="14"] { width: 14px; margin-right: 3px; } .comp strong { margin-left: 23px; white-space: nowrap; letter-spacing: .2px; }
.comp .ck2 { margin-left: 2px; } .comp .ck2 + strong { margin-left: 7px; }
.comp .help { margin-left: auto; margin-right: 7px; }
.rect { height: 215px; display: grid; grid-template-columns: 156px 1fr; grid-template-rows: 80px 1fr; }
.anchorbox { padding: 7px 0 0 7px; font-size: 10px; }
.anchorbox small { font-size: 10px; line-height: 16px; display: block; padding-left: 19px; letter-spacing: .35px; }
.arow { display: flex; margin-top: -2px; } .arow .vert { writing-mode: vertical-rl; transform: rotate(180deg); padding: 0 0 4px; text-align: left; width: 15px; height: 50px; margin: -3px -3px 3px 0; padding-top: 10px; }
.anchorbox .arow .vert { padding: 10px 0 0; }
.ltz { display: flex; gap: 2px; padding-top: 8px; letter-spacing: .25px; } .ltz div { width: 73px; display: flex; flex-direction: column; } .ltz .field { height: 18px; }
.ltz span:first-child { padding-left: 1px; }
.plist { grid-column: 1 / 3; letter-spacing: .15px; } .plist p { line-height: 20px; height: 20px; padding-left: 19px; }
.plist .anch { display: flex; align-items: center; padding-left: 7px; gap: 3px; height: 18px; margin-top: 1px; margin-bottom: -1px; } .plist .in { padding-left: 34px; }
.plist .pv { margin-top: 2px; } .plist .ro { margin-top: 8px; }
.cull { height: 31px; line-height: 28px; padding-left: 19px; }
.imgp { padding: 4px 0 0 19px; line-height: 20px; }
.scroll { width: 13px; background: #323232; border-left: 1px solid #2a2a2a; display: flex; flex-direction: column; align-items: center; }
.up { border: 4px solid transparent; border-bottom: 5px solid #c4c4c4; border-top: 0; margin: 5px 0 6px; }
.thumb { width: 10px; height: 255px; border-radius: 5px; background: #5f5f5f; } .down { border: 4px solid transparent; border-top: 5px solid #c4c4c4; border-bottom: 0; margin-top: auto; margin-bottom: 6px; }
.prevhead { height: 22px; flex: none; display: flex; align-items: center; background: #3c3c3c; border-top: 1px solid #202020; border-bottom: 1px solid #202020; padding: 0 6px 0 4px; }
.prevhead span { display: flex; align-items: center; gap: 3px; width: 52px; height: 20px; padding-left: 3px; padding-top: 1px; border: solid #202020; border-width: 0 1px; }
.prevhead strong { letter-spacing: 0; }
.grip { flex: 1; height: 5px; border: solid #686868; border-width: 1px 0; margin: 1px 4px 0 3px; }
.preview { height: 153px; background: #313131; padding-left: 121px; }
.checker { position: relative; overflow: hidden; width: 153px; height: 153px; background: repeating-conic-gradient(#444 0 25%, #646464 0 50%) -3px -3px / 32px 32px; }
.sprite { width: 124px; height: 118px; margin: 18px 0 0 14px; border-radius: 22px; background: #d0d0d0; box-shadow: 0 0 4px 2px #222, inset 0 0 7px #888; }
.checker > span { position: absolute; left: 22px; top: 134px; color: #fff; letter-spacing: -.6px; text-shadow: 1px 1px 1px #000; }
.dash { position: absolute; left: 0; width: 100%; height: 1px; background: repeating-linear-gradient(90deg, #ddd 0 8px, #222 8px 16px); } .da { top: 49px; } .db { top: 107px; }
.prevfoot { flex: 1; background: #3c3c3c; border-top: 1px solid #202020; }
.status { height: 22px; background: #191919; padding: 4px 0 0 1264px; }

.taskbar { display: flex; align-items: center; height: 40px; background: linear-gradient(90deg, #302b27, #474139 30%, #454443 55%, #454442 70%, #3d3831 80%, #3c3630); color: #fff; }
.start { width: 48px; padding-left: 16px; }
.find { display: flex; align-items: center; width: 344px; height: 40px; background: #f2f2f2; border: 1px solid #bbb; color: #333; font: 14.500px/20px "Noto Sans CJK JP", sans-serif; letter-spacing: -1.950px; padding-left: 11px; }
.find svg { margin-right: 9px; }
.app { width: 48px; height: 40px; display: flex; flex: none; align-items: center; justify-content: center; position: relative; }
.app.tv { width: 50px; padding-right: 4px; } .tv + .app { padding-left: 8px; }
.n47.app { width: 47px; } .n46.app { width: 46px; } .sta svg { margin-right: 2px; }
.run::after, .act::after { content: ""; position: absolute; left: 5px; right: 4px; bottom: 0; height: 2px; background: #76b9ed; }
.act { background: #6b6a68; } .act::after { left: 0; right: 0; }
.badge { font: 700 11px "Open Sans", sans-serif; fill: #fff; stroke: none; letter-spacing: 0; }
.tray { margin-left: 7px; }
.clock { display: flex; flex-direction: column; align-items: center; width: 78px; font: 500 11.500px/18px "Open Sans", sans-serif; letter-spacing: -.15px; }
.note { margin-left: 7px; } .edge { margin-left: 7px; width: 1px; height: 40px; background: #8a8781; }

.picker { position: absolute; left: 1125px; top: 212px; width: 233px; height: 508px; background: #3c3c3c; box-shadow: 0 1px 5px rgba(0, 0, 0, .5); }
.ptitle { display: flex; justify-content: space-between; height: 30px; background: #fff; color: #111; font: 12px/30px "Open Sans", sans-serif; letter-spacing: -.2px; padding: 0 1px 0 8px; }
.ptitle b { width: 19px; height: 19px; margin-top: 7px; background: #c75050; color: #fff; font: 700 11px/17px "Open Sans", sans-serif; text-align: center; }
.pick-top { display: flex; justify-content: space-between; align-items: flex-start; padding: 15px 10px 0 11px; height: 49px; }
.cmp { display: flex; width: 76px; height: 24px; border-radius: 3px; overflow: hidden; } .cmp i { width: 38px; background: repeating-conic-gradient(#fff 0 25%, #ddd 0 50%) 0 0 / 8px 8px; } .cmp b { width: 38px; background: #afeeee; }
.wheel { display: grid; place-items: center; width: 216px; height: 216px; margin-left: 8px; position: relative; }
.ring, .sv { grid-area: 1 / 1; }
.ring { width: 216px; height: 216px; border-radius: 50%; background: conic-gradient(from 90deg, red, #f0f, blue, cyan, lime, yellow, red); -webkit-mask: radial-gradient(circle, transparent 84.500px, #000 85.500px); mask: radial-gradient(circle, transparent 84.500px, #000 85.500px); }
.sv { width: 106px; height: 106px; background: linear-gradient(transparent, #000), linear-gradient(90deg, #fff, #0ff); }
.h-hue, .h-sv { position: absolute; border-radius: 50%; }
.h-hue { left: 1px; top: 97px; width: 22px; height: 22px; border: 2px solid #f3f3f3; background: #0ff; }
.h-sv { left: 78px; top: 56px; width: 12px; height: 12px; border: 1px solid #111; }
.mode { display: flex; justify-content: flex-end; padding: 12px 10px 0 0; height: 38px; } .mode .dd { width: 83px; height: 18px; letter-spacing: .1px; padding-right: 5px; }
.ch { display: flex; align-items: center; height: 18px; margin-bottom: 8px; padding-left: 11px; } .ch label { width: 15px; padding-top: 1px; }
.ch .field { width: 45px; margin-left: 5px; }
.sl { position: relative; width: 147px; height: 18px; border: 1px solid #222; } .sl i { position: absolute; top: 0; width: 4px; height: 16px; background: #eee; border: 1px solid #aaa; }
.r { background: linear-gradient(90deg, #0ee, #fee); } .g { background: linear-gradient(90deg, #af00ee, #afffee); } .b { background: linear-gradient(90deg, #afee00, #afeeff); }
.a { background: linear-gradient(90deg, transparent, #afeeee), repeating-conic-gradient(#fff 0 25%, #ccc 0 50%) 0 0 / 8px 8px; border-color: #101840; box-shadow: -1px 0 #eee; }
.foc label { color: #7baefa; } .foc .field { border-color: #3a79bb; }
.hex { display: flex; justify-content: space-between; align-items: center; height: 18px; padding: 1px 10px 0 11px; } .hex .field { width: 83px; margin-top: -1px; }
.swh { display: flex; align-items: center; height: 16px; margin-top: 8px; padding-left: 12px; gap: 3px; } .swh svg { margin-left: auto; margin-right: 18px; }
.sws { display: flex; margin: 3px 0 0 10px; height: 14px; } .k { width: 27px; background: #000; } .w { width: 12px; margin: 1px; background: #fff; margin-left: 0; } .t { width: 10px; height: 10px; margin: 2px 0 0 1px; background: #afeeee; border: 1.500px solid #111; outline: 1px solid #666; }
```
